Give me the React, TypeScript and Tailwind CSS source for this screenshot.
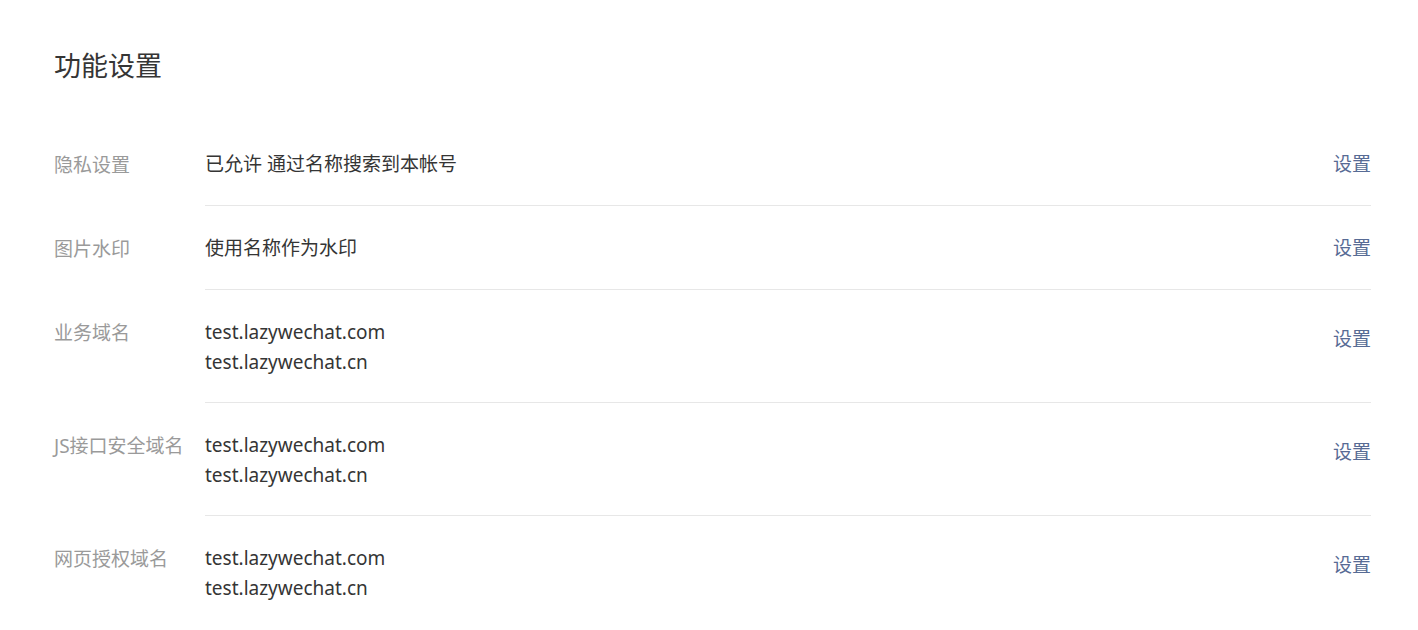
const rows: { label: string; lines: string[] }[] = [
  { label: "隐私设置", lines: ["已允许 通过名称搜索到本帐号"] },
  { label: "图片水印", lines: ["使用名称作为水印"] },
  { label: "业务域名", lines: ["test.lazywechat.com", "test.lazywechat.cn"] },
  { label: "JS接口安全域名", lines: ["test.lazywechat.com", "test.lazywechat.cn"] },
  { label: "网页授权域名", lines: ["test.lazywechat.com", "test.lazywechat.cn"] },
];

const App = () => {
  return (
    <main
      className="min-h-screen bg-white pl-[54px] pr-[47px] pt-[46px] text-[19px] text-[#353535]"
      style={{ fontFamily: '"Noto Sans", "Noto Sans CJK SC", sans-serif' }}
    >
      <h2 className="text-[27px] leading-[40px] font-normal text-[#353535]">功能设置</h2>

      <section className="mt-[36px]">
        {rows.map((row, i) => {
          const multi = row.lines.length > 1;
          return (
            <div key={row.label} className="flex">
              <div className="w-[151px] shrink-0 pt-[28px] leading-[30px] text-[#9a9a9a] whitespace-nowrap">
                {row.label}
              </div>
              <div
                className={`flex flex-1 justify-between pt-[27px] ${multi ? "pb-[25px]" : "pb-[26px]"} ${
                  i < rows.length - 1 ? "border-b border-[#e7e7e7]" : ""
                }`}
              >
                <div className="leading-[30px]">
                  {row.lines.map((line) => (
                    <p key={line} className="whitespace-pre">
                      {line}
                    </p>
                  ))}
                </div>
                <a className={`leading-[30px] text-[#576b95] cursor-pointer ${multi ? "mt-[7px]" : ""}`}>设置</a>
              </div>
            </div>
          );
        })}
      </section>
    </main>
  );
};

export default App;
